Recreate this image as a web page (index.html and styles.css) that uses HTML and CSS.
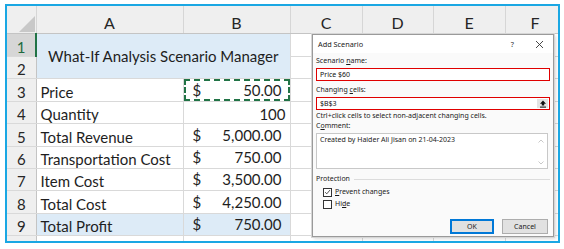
FILE: index.html
```html
<!DOCTYPE html>
<html>
<head>
  <title>What-If Analysis Scenario Manager</title>
  <link rel="stylesheet" href="styles.css">
</head>
<body>
  <div class="frame">
    <table class="sheet">
      <colgroup>
        <col class="c-rh"><col class="c-a"><col class="c-b"><col class="c-c"><col class="c-d"><col class="c-e"><col class="c-f">
      </colgroup>
      <tr class="head">
        <th class="corner">
          <svg width="18" height="18" viewBox="0 0 18 18"><polygon points="17,1 17,17 1,17" fill="#c8c8c8"/></svg>
        </th>
        <th>A</th><th>B</th><th>C</th><th>D</th><th>E</th><th>F</th>
      </tr>
      <tr class="h23">
        <th class="rh sel">1</th>
        <td class="title" colspan="2" rowspan="2">What-If Analysis Scenario Manager</td>
        <td></td><td></td><td></td><td></td>
      </tr>
      <tr class="h22"><th class="rh">2</th><td></td><td></td><td></td><td></td></tr>
      <tr class="h23">
        <th class="rh">3</th><td class="label">Price</td>
        <td class="marked"><div class="acct"><span>$</span><span>50.00</span></div></td>
        <td></td><td></td><td></td><td></td>
      </tr>
      <tr class="h22">
        <th class="rh">4</th><td class="label">Quantity</td>
        <td class="num">100</td>
        <td></td><td></td><td></td><td></td>
      </tr>
      <tr class="h23">
        <th class="rh">5</th><td class="label">Total Revenue</td>
        <td><div class="acct"><span>$</span><span>5,000.00</span></div></td>
        <td></td><td></td><td></td><td></td>
      </tr>
      <tr class="h22">
        <th class="rh">6</th><td class="label">Transportation Cost</td>
        <td><div class="acct"><span>$</span><span>750.00</span></div></td>
        <td></td><td></td><td></td><td></td>
      </tr>
      <tr class="h22">
        <th class="rh">7</th><td class="label">Item Cost</td>
        <td><div class="acct"><span>$</span><span>3,500.00</span></div></td>
        <td></td><td></td><td></td><td></td>
      </tr>
      <tr class="h23">
        <th class="rh">8</th><td class="label">Total Cost</td>
        <td><div class="acct"><span>$</span><span>4,250.00</span></div></td>
        <td></td><td></td><td></td><td></td>
      </tr>
      <tr class="h22 total">
        <th class="rh">9</th><td class="label">Total Profit</td>
        <td><div class="acct"><span>$</span><span>750.00</span></div></td>
        <td class="plain"></td><td class="plain"></td><td class="plain"></td><td class="plain"></td>
      </tr>
      <tr class="h22"><th class="rh"></th><td></td><td></td><td></td><td></td><td></td><td></td></tr>
    </table>

    <div class="dialog">
      <div class="dlg-title">
        <span class="dlg-name">Add Scenario</span>
        <span class="dlg-help">?</span>
        <svg class="dlg-close" width="9" height="9" viewBox="0 0 9 9"><path d="M1 1L8 8M8 1L1 8" stroke="#333" stroke-width="0.9"/></svg>
      </div>
      <div class="dlg-body">
        <div class="lbl">Scenario <u>n</u>ame:</div>
        <div class="field">Price $60</div>
        <div class="lbl gap">Changing <u>c</u>ells:</div>
        <div class="field">
          <span>$B$3</span>
          <span class="pick">
            <svg width="8" height="8" viewBox="0 0 8 8"><path d="M4 0.5L7 3.8H5.2V5.6H2.8V3.8H1Z" fill="#111"/><rect x="1" y="6.6" width="6" height="1" fill="#111"/></svg>
          </span>
        </div>
        <div class="hint">Ctrl+click cells to select non-adjacent changing cells.</div>
        <div class="lbl">C<u>o</u>mment:</div>
        <div class="memo">
          <span>Created by Haider Ali Jisan on 21-04-2023</span>
          <span class="memo-scroll">
            <svg width="6" height="4" viewBox="0 0 6 4"><path d="M0.5 3.5L3 1L5.5 3.5" fill="none" stroke="#bbb" stroke-width="0.8"/></svg>
            <svg width="6" height="4" viewBox="0 0 6 4"><path d="M0.5 0.5L3 3L5.5 0.5" fill="none" stroke="#bbb" stroke-width="0.8"/></svg>
          </span>
        </div>
        <div class="group"><span>Protection</span><span class="rule"></span></div>
        <div class="check first">
          <span class="box">
            <svg width="8" height="8" viewBox="0 0 8 8"><path d="M1.3 4.2L3.2 6.1L6.8 1.8" fill="none" stroke="#222" stroke-width="0.9"/></svg>
          </span>
          <span><u>P</u>revent changes</span>
        </div>
        <div class="check">
          <span class="box"></span>
          <span>Hi<u>d</u>e</span>
        </div>
        <div class="buttons">
          <button class="btn primary">OK</button>
          <button class="btn">Cancel</button>
        </div>
      </div>
    </div>
  </div>
</body>
</html>
```

FILE: styles.css
```css
body {
  margin: 0;
  padding: 0;
  background: #ffffff;
}

.frame {
  position: relative;
  margin: 4px 0 0 5px;
  width: 551px;
  height: 235px;
  border: 2px solid #1aa7e3;
  overflow: hidden;
  background: #ffffff;
}

/* spreadsheet */

.sheet {
  table-layout: fixed;
  border-collapse: collapse;
  width: 558px;
  font-family: Lato, "Open Sans", sans-serif;
  font-size: 15px;
  color: #1e1e1e;
}

.c-rh { width: 29px; }
.c-a { width: 147px; }
.c-b { width: 107px; }
.c-c { width: 72px; }
.c-d { width: 71px; }
.c-e { width: 72px; }
.c-f { width: 60px; }

.sheet td,
.sheet th {
  padding: 0;
  border-right: 1px solid #d9d9d9;
  border-bottom: 1px solid #d9d9d9;
  overflow: hidden;
  white-space: nowrap;
}

.head {
  height: 27px;
}

.head th {
  background: #efefef;
  font-weight: normal;
  color: #262626;
  font-size: 16px;
  text-align: center;
  vertical-align: bottom;
  padding-bottom: 1px;
  border-right: 1px solid #d6d6d6;
  border-bottom: 1px solid #c4c4c4;
}

.head th.corner {
  vertical-align: bottom;
  text-align: right;
  padding: 0;
  line-height: 0;
}

.h22 { height: 22px; }
.h23 { height: 23px; }

.rh {
  background: #efefef;
  font-weight: normal;
  color: #262626;
  text-align: center;
  vertical-align: bottom;
  border-right: 1px solid #c4c4c4 !important;
}

.rh.sel {
  background: #d6d6d6;
  color: #1f6a3f;
  border-right: 2px solid #217346 !important;
}

.title {
  background: #ddebf7;
  text-align: center;
  vertical-align: middle;
  padding-top: 1px !important;
}

.label {
  padding-left: 4px !important;
  vertical-align: bottom;
}

.num {
  text-align: right;
  padding-right: 4px !important;
  vertical-align: bottom;
}

.acct {
  display: flex;
  justify-content: space-between;
  padding: 0 8px 0 9px;
}

.marked {
  position: relative;
}

.marked::after {
  content: "";
  position: absolute;
  left: 0;
  top: 0;
  right: 0;
  bottom: 0;
  border: 2px dashed #217346;
}

.total td {
  background: #ddebf7;
}

.total td.plain {
  background: #ffffff;
}

/* dialog */

.dialog {
  position: absolute;
  left: 305px;
  top: 28px;
  width: 240px;
  height: 201px;
  border: 1px solid #9a9a9a;
  box-shadow: 0 0 0 1px #d6d6d6, 2px 2px 3px rgba(0, 0, 0, 0.15);
  background: #fafafa;
  font-family: "Noto Sans", "Open Sans", sans-serif;
  font-size: 7px;
  color: #1a1a1a;
  display: flex;
  flex-direction: column;
}

.dlg-title {
  display: flex;
  align-items: center;
  height: 18px;
  padding: 0 9px 0 5px;
  background: #ffffff;
  font-size: 7.3px;
}

.dlg-name {
  flex: 1;
}

.dlg-help {
  margin-right: 21px;
  color: #333;
}

.dlg-body {
  display: flex;
  flex-direction: column;
  padding: 3px 3px 0 3px;
}

.lbl {
  line-height: 10px;
  margin-bottom: 2px;
}

.lbl.gap {
  margin-top: 4px;
}

.field {
  display: flex;
  align-items: center;
  justify-content: space-between;
  height: 11px;
  border: 1px solid #e00000;
  background: #ffffff;
  padding-left: 3px;
  line-height: 11px;
  color: #111;
}

.pick {
  display: flex;
  align-items: center;
  justify-content: center;
  width: 11px;
  height: 9px;
  margin-right: 1px;
  background: #e3e3e3;
}

.hint {
  line-height: 10px;
  margin-top: 1px;
}

.memo {
  display: flex;
  justify-content: space-between;
  height: 36px;
  margin-right: 2px;
  border: 1px solid #c8c8c8;
  background: #ffffff;
  padding: 1px 0 0 3px;
  box-sizing: border-box;
}

.memo-scroll {
  display: flex;
  flex-direction: column;
  justify-content: space-between;
  padding: 4px 3px 3px 0;
}

.group {
  display: flex;
  align-items: center;
  margin-top: 5px;
  line-height: 10px;
  gap: 4px;
}

.rule {
  flex: 1;
  height: 1px;
  background: #dcdcdc;
}

.check {
  display: flex;
  align-items: center;
  gap: 3px;
  margin: 2px 0 0 7px;
  line-height: 10px;
}

.check.first {
  margin-top: 3px;
}

.box {
  display: flex;
  align-items: center;
  justify-content: center;
  width: 7px;
  height: 7px;
  border: 1px solid #333;
  background: #ffffff;
}

.buttons {
  display: flex;
  justify-content: flex-end;
  gap: 8px;
  margin-top: 10px;
  margin-right: 2px;
}

.btn {
  width: 46px;
  height: 15px;
  padding: 0;
  border: 1px solid #adadad;
  background: #e1e1e1;
  font-family: "Noto Sans", "Open Sans", sans-serif;
  font-size: 7px;
  color: #1a1a1a;
}

.btn.primary {
  width: 44px;
  border: 2px solid #0078d7;
}
```
